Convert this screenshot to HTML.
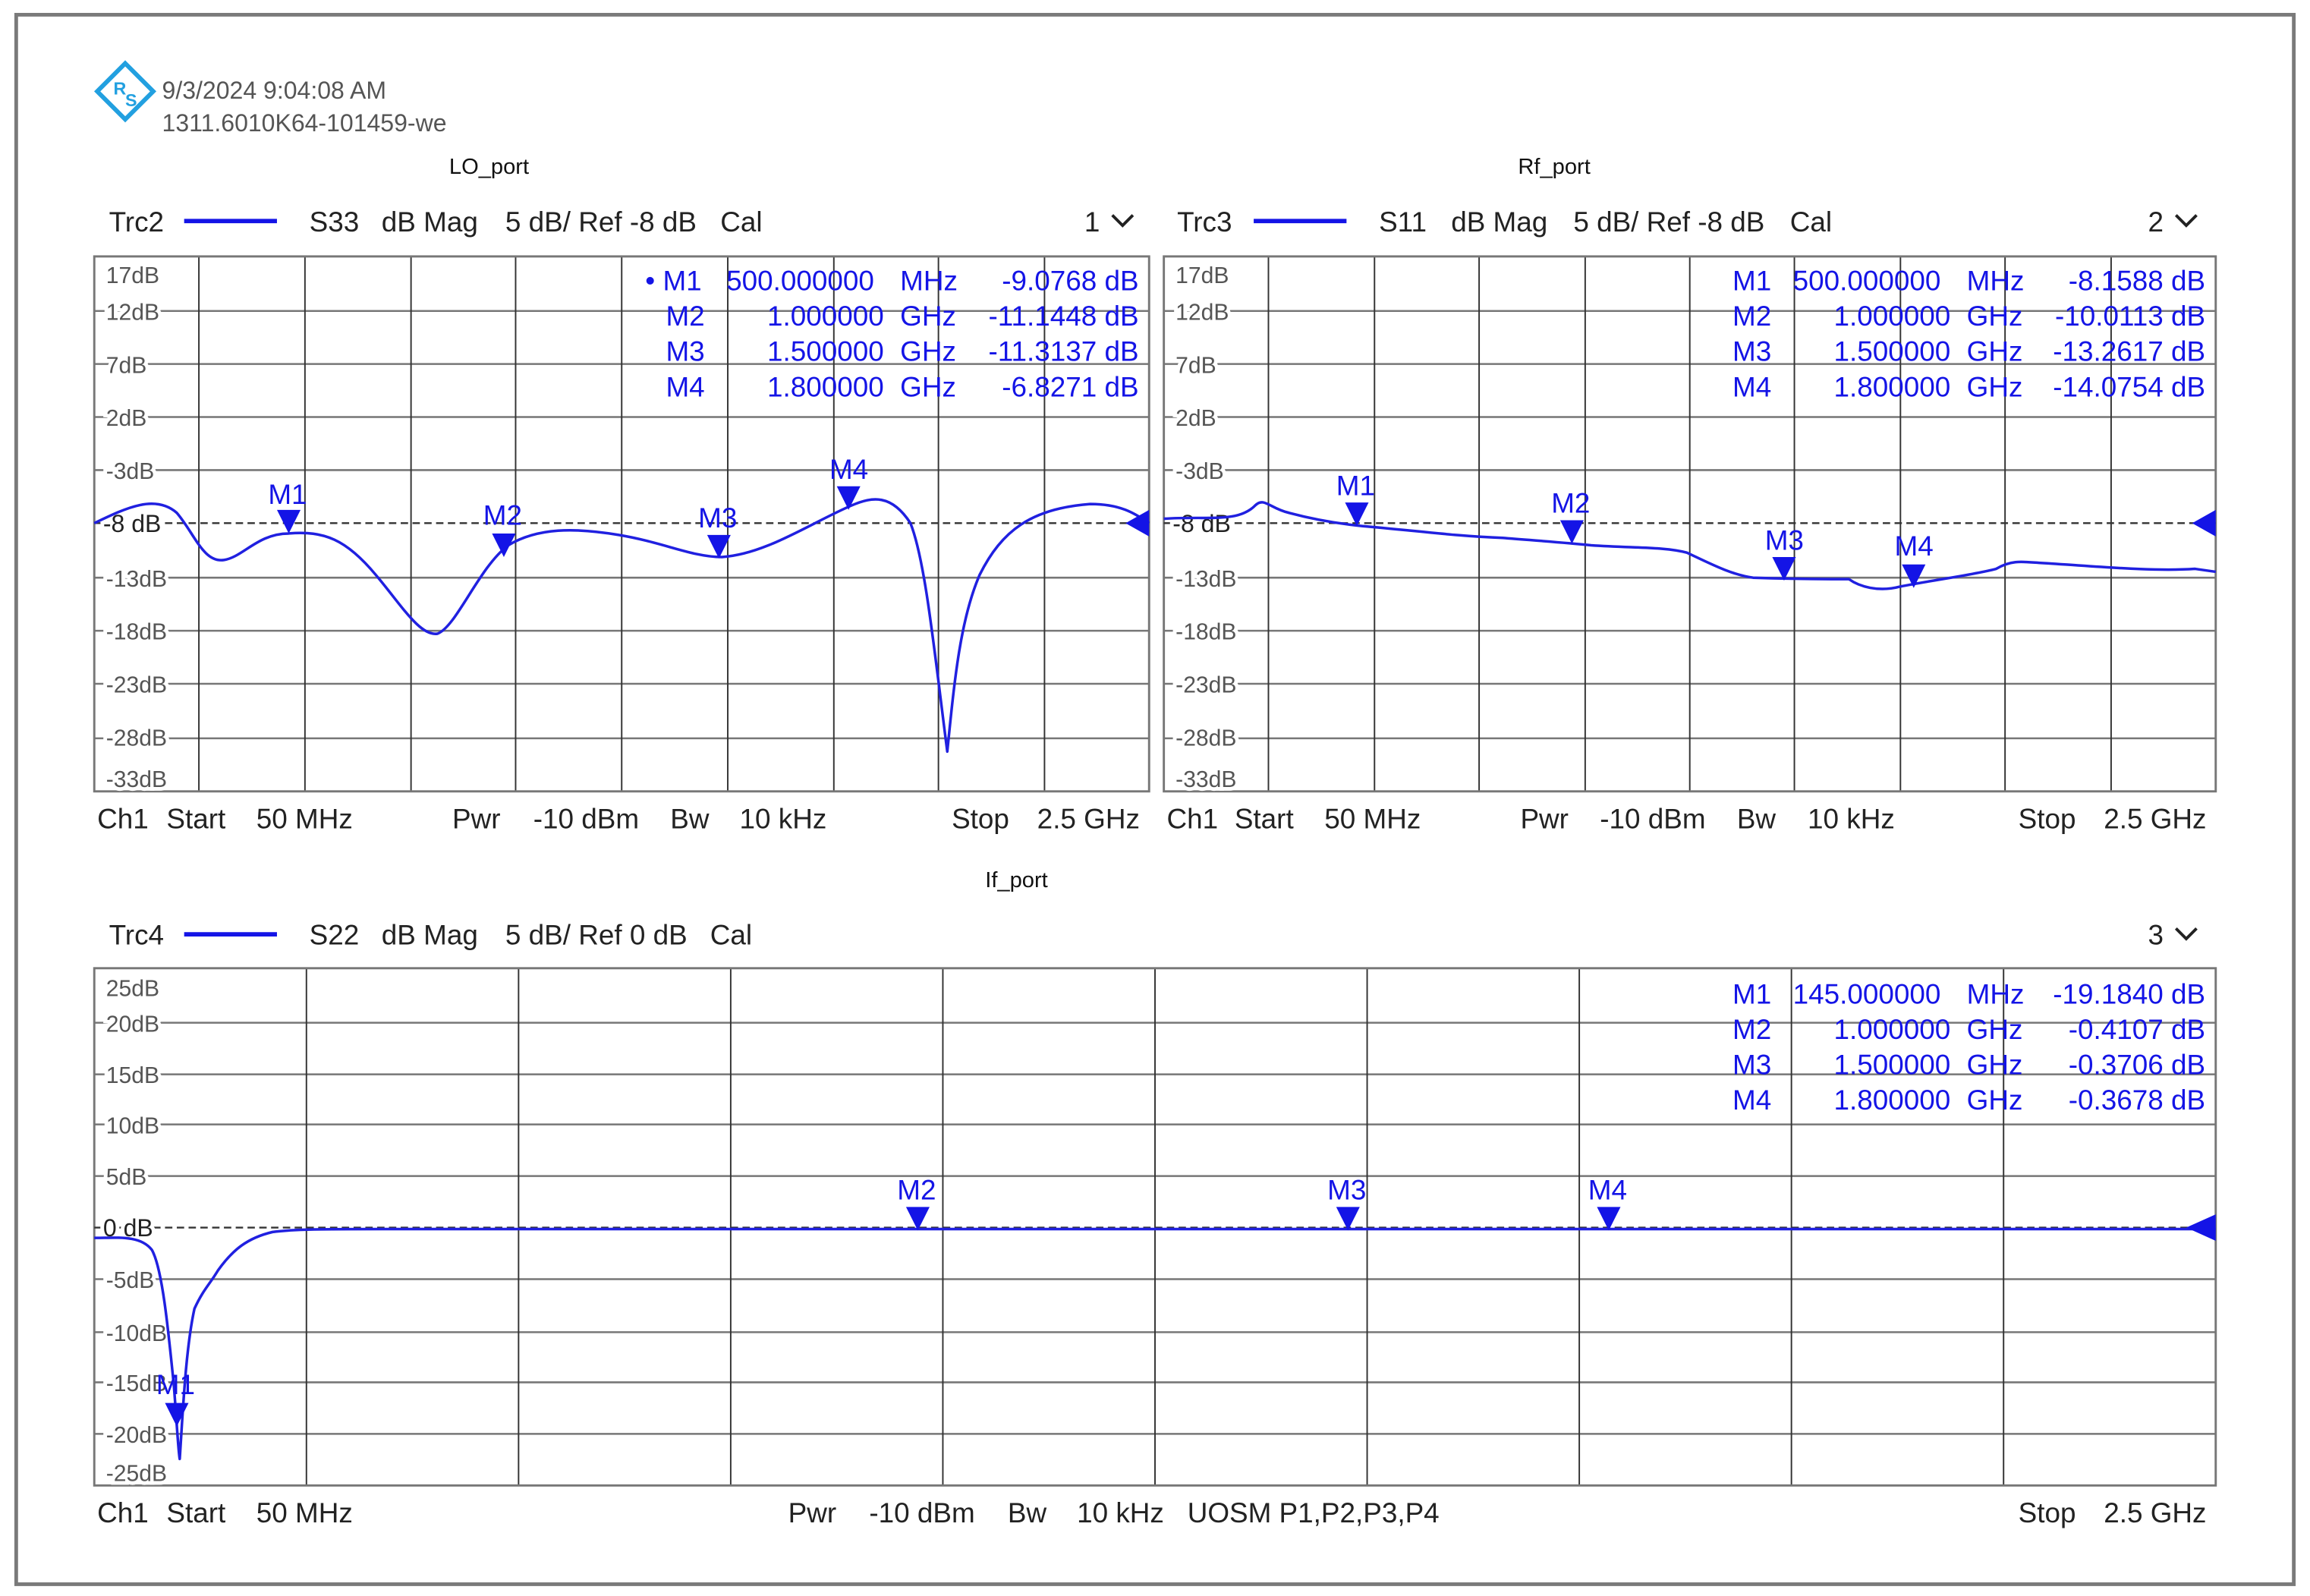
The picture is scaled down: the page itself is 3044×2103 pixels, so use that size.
<!DOCTYPE html>
<html><head><meta charset="utf-8"><style>
html,body{margin:0;padding:0;background:#fff;}
svg{display:block;}
text{font-family:"Liberation Sans Narrow","Liberation Sans",sans-serif;}
.k{fill:#222;font-size:19px;}
.g{fill:#555;font-size:15.5px;stroke:#fff;stroke-width:5px;paint-order:stroke;}
.b{fill:#1414e6;font-size:19px;}
.grid line{stroke:#333;stroke-width:1;}
.hg line{stroke:#777;stroke-width:1.3;}
</style></head><body>
<svg width="3044" height="2103" viewBox="0 0 1568 1083" preserveAspectRatio="none" xmlns="http://www.w3.org/2000/svg">
<rect x="0" y="0" width="1568" height="1083" fill="#fff"/>
<rect x="11" y="10" width="1546" height="1065" fill="none" stroke="#7a7a7a" stroke-width="2.5"/>
<g transform="translate(85,62)">
<polygon points="0,-19 19,0 0,19 -19,0" fill="none" stroke="#22a0e0" stroke-width="3"/>
<text x="-8" y="2" fill="#22a0e0" font-size="12" font-weight="bold">R</text>
<text x="0" y="10" fill="#22a0e0" font-size="12" font-weight="bold">S</text>
</g>
<text x="110" y="67" fill="#555" font-size="16.5">9/3/2024 9:04:08 AM</text>
<text x="110" y="89" fill="#555" font-size="16.5">1311.6010K64-101459-we</text>
<text x="332" y="118" fill="#111" font-size="15" text-anchor="middle">LO_port</text>
<text x="1055" y="118" fill="#111" font-size="15" text-anchor="middle">Rf_port</text>
<text x="690" y="602" fill="#111" font-size="15" text-anchor="middle">If_port</text>

<g class="k">
<text x="74" y="157">Trc2</text><text x="210" y="157">S33</text><text x="259" y="157">dB Mag</text><text x="343" y="157">5 dB/ Ref -8 dB</text><text x="489" y="157">Cal</text><text x="736" y="157">1</text>
<text x="799" y="157">Trc3</text><text x="936" y="157">S11</text><text x="985" y="157">dB Mag</text><text x="1068" y="157">5 dB/ Ref -8 dB</text><text x="1215" y="157">Cal</text><text x="1458" y="157">2</text>
<text x="74" y="641">Trc4</text><text x="210" y="641">S22</text><text x="259" y="641">dB Mag</text><text x="343" y="641">5 dB/ Ref 0 dB</text><text x="482" y="641">Cal</text><text x="1458" y="641">3</text>
</g>
<g stroke="#1414e6" stroke-width="3"><line x1="125" y1="150" x2="188" y2="150"/><line x1="851" y1="150" x2="914" y2="150"/><line x1="125" y1="634" x2="188" y2="634"/></g>
<g fill="none" stroke="#222" stroke-width="2"><polyline points="755,146 762,153 769,146"/><polyline points="1477,146 1484,153 1491,146"/><polyline points="1477,630 1484,637 1491,630"/></g>

<g class="hg">
<line x1="64" y1="211" x2="780" y2="211"/><line x1="64" y1="247" x2="780" y2="247"/><line x1="64" y1="283" x2="780" y2="283"/><line x1="64" y1="319" x2="780" y2="319"/><line x1="64" y1="392" x2="780" y2="392"/><line x1="64" y1="428" x2="780" y2="428"/><line x1="64" y1="464" x2="780" y2="464"/><line x1="64" y1="501" x2="780" y2="501"/>
<line x1="790" y1="211" x2="1504" y2="211"/><line x1="790" y1="247" x2="1504" y2="247"/><line x1="790" y1="283" x2="1504" y2="283"/><line x1="790" y1="319" x2="1504" y2="319"/><line x1="790" y1="392" x2="1504" y2="392"/><line x1="790" y1="428" x2="1504" y2="428"/><line x1="790" y1="464" x2="1504" y2="464"/><line x1="790" y1="501" x2="1504" y2="501"/>
<line x1="64" y1="694" x2="1504" y2="694"/><line x1="64" y1="729" x2="1504" y2="729"/><line x1="64" y1="763" x2="1504" y2="763"/><line x1="64" y1="798" x2="1504" y2="798"/><line x1="64" y1="868" x2="1504" y2="868"/><line x1="64" y1="904" x2="1504" y2="904"/><line x1="64" y1="938" x2="1504" y2="938"/><line x1="64" y1="973" x2="1504" y2="973"/>
</g>
<g class="grid">
<line x1="135" y1="174" x2="135" y2="537"/><line x1="207" y1="174" x2="207" y2="537"/><line x1="279" y1="174" x2="279" y2="537"/><line x1="350" y1="174" x2="350" y2="537"/><line x1="422" y1="174" x2="422" y2="537"/><line x1="494" y1="174" x2="494" y2="537"/><line x1="566" y1="174" x2="566" y2="537"/><line x1="637" y1="174" x2="637" y2="537"/><line x1="709" y1="174" x2="709" y2="537"/>
<line x1="861" y1="174" x2="861" y2="537"/><line x1="933" y1="174" x2="933" y2="537"/><line x1="1004" y1="174" x2="1004" y2="537"/><line x1="1076" y1="174" x2="1076" y2="537"/><line x1="1147" y1="174" x2="1147" y2="537"/><line x1="1218" y1="174" x2="1218" y2="537"/><line x1="1290" y1="174" x2="1290" y2="537"/><line x1="1361" y1="174" x2="1361" y2="537"/><line x1="1433" y1="174" x2="1433" y2="537"/>
<line x1="208" y1="657" x2="208" y2="1008"/><line x1="352" y1="657" x2="352" y2="1008"/><line x1="496" y1="657" x2="496" y2="1008"/><line x1="640" y1="657" x2="640" y2="1008"/><line x1="784" y1="657" x2="784" y2="1008"/><line x1="928" y1="657" x2="928" y2="1008"/><line x1="1072" y1="657" x2="1072" y2="1008"/><line x1="1216" y1="657" x2="1216" y2="1008"/><line x1="1360" y1="657" x2="1360" y2="1008"/>
</g>
<g fill="none" stroke="#777" stroke-width="1.5">
<rect x="64" y="174" width="716" height="363"/><rect x="790" y="174" width="714" height="363"/><rect x="64" y="657" width="1440" height="351"/>
</g>
<g stroke="#333" stroke-width="1.2" stroke-dasharray="5,3"><line x1="64" y1="355" x2="780" y2="355"/><line x1="790" y1="355" x2="1504" y2="355"/><line x1="64" y1="833" x2="1504" y2="833"/></g>

<g class="g">
<text x="72" y="192">17dB</text><text x="72" y="217">12dB</text><text x="72" y="253">7dB</text><text x="72" y="289">2dB</text><text x="72" y="325">-3dB</text><text x="70" y="361" fill="#222" font-size="16.5">-8 dB</text><text x="72" y="398">-13dB</text><text x="72" y="434">-18dB</text><text x="72" y="470">-23dB</text><text x="72" y="506">-28dB</text><text x="72" y="534">-33dB</text>
<text x="798" y="192">17dB</text><text x="798" y="217">12dB</text><text x="798" y="253">7dB</text><text x="798" y="289">2dB</text><text x="798" y="325">-3dB</text><text x="796" y="361" fill="#222" font-size="16.5">-8 dB</text><text x="798" y="398">-13dB</text><text x="798" y="434">-18dB</text><text x="798" y="470">-23dB</text><text x="798" y="506">-28dB</text><text x="798" y="534">-33dB</text>
<text x="72" y="676">25dB</text><text x="72" y="700">20dB</text><text x="72" y="735">15dB</text><text x="72" y="769">10dB</text><text x="72" y="804">5dB</text><text x="70" y="839" fill="#222" font-size="16.5">0 dB</text><text x="72" y="874">-5dB</text><text x="72" y="910">-10dB</text><text x="72" y="944">-15dB</text><text x="72" y="979">-20dB</text><text x="72" y="1005">-25dB</text>
</g>

<g fill="none" stroke="#2020e0" stroke-width="1.8" stroke-linejoin="round">
<path d="M64,355 C85,345 105,335 120,348 C132,362 138,382 152,380 C165,378 175,362 196,362 C220,360 235,366 255,390 C272,410 285,432 297,430 C310,425 325,385 345,370 C365,358 390,358 420,363 C450,368 470,378 490,378 C520,376 550,355 578,343 C592,337 605,335 618,355 C628,380 634,440 643,510 C648,460 652,420 665,390 C680,360 700,345 740,342 C760,342 770,348 780,355"/>
<path d="M790,352 C820,350 840,355 852,343 C858,337 862,345 875,348 C890,352 905,355 925,357 C960,360 990,364 1020,365 C1045,367 1060,368 1080,370 C1110,372 1130,371 1145,375 C1160,382 1175,390 1190,392 C1220,393 1240,393 1255,393 C1262,398 1275,402 1290,398 C1310,394 1340,390 1355,386 C1365,380 1372,381 1385,382 C1420,384 1460,388 1490,386 L1504,388"/>
<path d="M64,840 C80,840 95,838 103,848 C110,860 114,900 118,940 C120,965 121,985 122,990 C124,960 126,915 132,888 C138,875 142,872 148,862 C158,848 168,840 185,836 C200,834 220,834 260,834 L1504,834"/>
</g>
<g fill="#1414e6"><polygon points="764,355 780,346 780,364"/><polygon points="1488,355 1504,346 1504,364"/><polygon points="1484,833 1504,824 1504,842"/></g>

<g fill="#1414e6">
<polygon points="188,346 204,346 196,362"/><polygon points="334,362 350,362 342,378"/><polygon points="480,363 496,363 488,379"/><polygon points="568,330 584,330 576,346"/>
<polygon points="913,341 929,341 921,357"/><polygon points="1059,353 1075,353 1067,369"/><polygon points="1203,378 1219,378 1211,394"/><polygon points="1291,383 1307,383 1299,399"/>
<polygon points="112,952 128,952 120,968"/><polygon points="615,819 631,819 623,835"/><polygon points="907,819 923,819 915,835"/><polygon points="1084,819 1100,819 1092,835"/>
</g>
<g class="b" font-size="17">
<text x="182" y="342">M1</text><text x="328" y="356">M2</text><text x="474" y="358">M3</text><text x="563" y="325">M4</text>
<text x="907" y="336">M1</text><text x="1053" y="348">M2</text><text x="1198" y="373">M3</text><text x="1286" y="377">M4</text>
<text x="106" y="946">M1</text><text x="609" y="814">M2</text><text x="901" y="814">M3</text><text x="1078" y="814">M4</text>
</g>

<g class="b">
<text x="438" y="197">• M1</text><text x="493" y="197">500.000000</text><text x="611" y="197">MHz</text><text x="773" y="197" text-anchor="end">-9.0768 dB</text>
<text x="452" y="221">M2</text><text x="600" y="221" text-anchor="end">1.000000</text><text x="611" y="221">GHz</text><text x="773" y="221" text-anchor="end">-11.1448 dB</text>
<text x="452" y="245">M3</text><text x="600" y="245" text-anchor="end">1.500000</text><text x="611" y="245">GHz</text><text x="773" y="245" text-anchor="end">-11.3137 dB</text>
<text x="452" y="269">M4</text><text x="600" y="269" text-anchor="end">1.800000</text><text x="611" y="269">GHz</text><text x="773" y="269" text-anchor="end">-6.8271 dB</text>

<text x="1176" y="197">M1</text><text x="1217" y="197">500.000000</text><text x="1335" y="197">MHz</text><text x="1497" y="197" text-anchor="end">-8.1588 dB</text>
<text x="1176" y="221">M2</text><text x="1324" y="221" text-anchor="end">1.000000</text><text x="1335" y="221">GHz</text><text x="1497" y="221" text-anchor="end">-10.0113 dB</text>
<text x="1176" y="245">M3</text><text x="1324" y="245" text-anchor="end">1.500000</text><text x="1335" y="245">GHz</text><text x="1497" y="245" text-anchor="end">-13.2617 dB</text>
<text x="1176" y="269">M4</text><text x="1324" y="269" text-anchor="end">1.800000</text><text x="1335" y="269">GHz</text><text x="1497" y="269" text-anchor="end">-14.0754 dB</text>

<text x="1176" y="681">M1</text><text x="1217" y="681">145.000000</text><text x="1335" y="681">MHz</text><text x="1497" y="681" text-anchor="end">-19.1840 dB</text>
<text x="1176" y="705">M2</text><text x="1324" y="705" text-anchor="end">1.000000</text><text x="1335" y="705">GHz</text><text x="1497" y="705" text-anchor="end">-0.4107 dB</text>
<text x="1176" y="729">M3</text><text x="1324" y="729" text-anchor="end">1.500000</text><text x="1335" y="729">GHz</text><text x="1497" y="729" text-anchor="end">-0.3706 dB</text>
<text x="1176" y="753">M4</text><text x="1324" y="753" text-anchor="end">1.800000</text><text x="1335" y="753">GHz</text><text x="1497" y="753" text-anchor="end">-0.3678 dB</text>
</g>

<g class="k">
<text x="66" y="562">Ch1</text><text x="113" y="562">Start</text><text x="174" y="562">50 MHz</text><text x="307" y="562">Pwr</text><text x="362" y="562">-10 dBm</text><text x="455" y="562">Bw</text><text x="502" y="562">10 kHz</text><text x="646" y="562">Stop</text><text x="704" y="562">2.5 GHz</text>
<text x="792" y="562">Ch1</text><text x="838" y="562">Start</text><text x="899" y="562">50 MHz</text><text x="1032" y="562">Pwr</text><text x="1086" y="562">-10 dBm</text><text x="1179" y="562">Bw</text><text x="1227" y="562">10 kHz</text><text x="1370" y="562">Stop</text><text x="1428" y="562">2.5 GHz</text>
<text x="66" y="1033">Ch1</text><text x="113" y="1033">Start</text><text x="174" y="1033">50 MHz</text><text x="535" y="1033">Pwr</text><text x="590" y="1033">-10 dBm</text><text x="684" y="1033">Bw</text><text x="731" y="1033">10 kHz</text><text x="806" y="1033">UOSM P1,P2,P3,P4</text><text x="1370" y="1033">Stop</text><text x="1428" y="1033">2.5 GHz</text>
</g>
</svg>
</body></html>
